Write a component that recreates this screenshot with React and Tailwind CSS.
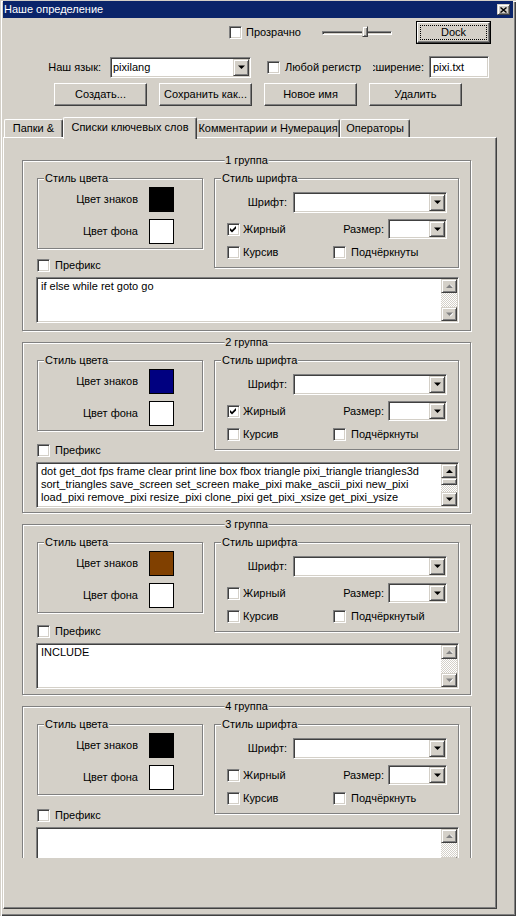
import React from 'react';

// classic win2k bevels
const sunken = 'border border-t-[#808080] border-l-[#808080] border-b-white border-r-white shadow-[inset_1px_1px_0_#404040,inset_-1px_-1px_0_#d4d0c8]';
const raised = 'border border-t-white border-l-white border-b-[#404040] border-r-[#404040] shadow-[inset_-1px_-1px_0_#808080]';
const raisedSm = 'border border-t-[#d4d0c8] border-l-[#d4d0c8] border-b-[#404040] border-r-[#404040] shadow-[inset_1px_1px_0_#fff,inset_-1px_-1px_0_#808080]';
const etched = 'border border-[#808080] shadow-[inset_1px_1px_0_#fff,1px_1px_0_#fff]';
const checker = 'bg-[image:repeating-conic-gradient(#fff_0%_25%,#d4d0c8_0%_50%)] bg-[length:2px_2px]';

const groups = [
  { n: 1, fg: 'bg-black', bold: true, under: 'Подчёркнуты', lines: ['if else while ret goto go'], off: 'mt-[10px]' },
  {
    n: 2,
    fg: 'bg-[#000080]',
    bold: true,
    under: 'Подчёркнуты',
    active: true,
    off: 'mt-[13px]',
    lines: [
      'dot get_dot fps frame clear print line box fbox triangle pixi_triangle triangles3d',
      'sort_triangles save_screen set_screen make_pixi make_ascii_pixi new_pixi',
      'load_pixi remove_pixi resize_pixi clone_pixi get_pixi_xsize get_pixi_ysize',
    ],
  },
  { n: 3, fg: 'bg-[#804000]', bold: false, under: 'Подчёркнутый', lines: ['INCLUDE'], off: 'mt-[12px]' },
  { n: 4, fg: 'bg-black', bold: false, under: 'Подчёркнуть', lines: [], off: 'mt-[14px]' },
];

function Tri({ up, gray }) {
  return (
    <svg width="7" height="5" viewBox="0 0 7 5">
      {gray && <path d={up ? 'M1 4H8L4.5 0.5Z' : 'M1 1H8L4.5 4.5Z'} fill="#fff" />}
      <path d={up ? 'M0 4H7L3.5 0.5Z' : 'M0 0.5H7L3.5 4Z'} fill={gray ? '#808080' : '#000'} />
    </svg>
  );
}

function Check({ checked }) {
  return (
    <span className={`flex items-center justify-center w-[13px] h-[13px] shrink-0 bg-white ${sunken}`}>
      {checked && (
        <svg width="7" height="7" viewBox="0 0 7 7">
          <path d="M0 2L2 4L6 0V2.6L2 6.6L0 4.6Z" fill="#000" />
        </svg>
      )}
    </span>
  );
}

function Combo({ value, size }) {
  return (
    <div className={`flex bg-white ${sunken} ${size}`}>
      <span className="flex-1 pl-[2px] flex items-center">{value}</span>
      <div className={`my-[1px] mr-[1px] w-[16px] flex items-center justify-center bg-[#d4d0c8] ${raisedSm}`}>
        <Tri />
      </div>
    </div>
  );
}

function ScrollBar({ active }) {
  return (
    <div className="my-[1px] mr-[1px] w-[16px] flex flex-col">
      <div className={`h-[14px] flex items-center justify-center bg-[#d4d0c8] ${raisedSm}`}>
        <Tri up gray={!active} />
      </div>
      {active && <div className={`h-[7px] bg-[#d4d0c8] ${raisedSm}`} />}
      <div className={`flex-1 ${checker}`} />
      <div className={`h-[14px] flex items-center justify-center bg-[#d4d0c8] ${raisedSm}`}>
        <Tri gray={!active} />
      </div>
    </div>
  );
}

function Group({ g }) {
  return (
    <div className={`relative shrink-0 w-[449px] h-[171px] pl-[14px] pt-[17px] ${etched}`}>
      <span className="absolute top-[-7px] left-1/2 -translate-x-1/2 bg-[#d4d0c8] px-[1px] whitespace-nowrap">
        {g.n} группа
      </span>
      <div className="flex">
        <div className="w-[166px] flex flex-col">
          <div className={`relative h-[71px] pt-[8px] flex flex-col gap-[7px] ${etched}`}>
            <span className="absolute top-[-7px] left-[6px] bg-[#d4d0c8] px-[1px]">Стиль цвета</span>
            <div className="flex items-center h-[25px]">
              <span className="w-[100px] text-right">Цвет знаков</span>
              <span className={`ml-[11px] w-[25px] h-[25px] border border-black ${g.fg}`} />
            </div>
            <div className="flex items-center h-[25px]">
              <span className="w-[100px] text-right">Цвет фона</span>
              <span className="ml-[11px] w-[25px] h-[25px] border border-black bg-white" />
            </div>
          </div>
          <div className={`flex items-center h-[13px] ${g.off}`}>
            <Check />
            <span className="ml-[5px]">Префикс</span>
          </div>
        </div>

        <div className={`relative ml-[11px] w-[245px] h-[90px] pt-[13px] ${etched}`}>
          <span className="absolute top-[-7px] left-[6px] bg-[#d4d0c8] px-[1px]">Стиль шрифта</span>
          <div className="flex items-center h-[21px]">
            <span className="w-[72px] text-right">Шрифт:</span>
            <div className="ml-[6px]">
              <Combo size="w-[154px] h-[21px]" />
            </div>
          </div>
          <div className="mt-[6px] flex items-center h-[20px]">
            <span className="ml-[12px]">
              <Check checked={g.bold} />
            </span>
            <span className="ml-[3px] w-[80px]">Жирный</span>
            <span className="w-[61px] text-right">Размер:</span>
            <div className="ml-[4px]">
              <Combo size="w-[59px] h-[20px]" />
            </div>
          </div>
          <div className="mt-[7px] flex items-center h-[13px]">
            <span className="ml-[12px]">
              <Check />
            </span>
            <span className="ml-[3px] w-[90px]">Курсив</span>
            <Check />
            <span className="ml-[5px] w-[74px] overflow-hidden whitespace-nowrap">{g.under}</span>
          </div>
        </div>
      </div>

      <div className={`mt-[5px] ml-[-1px] w-[423px] h-[46px] bg-white flex ${sunken}`}>
        <div className="flex-1 pl-[4px] pt-[2px] whitespace-pre overflow-hidden">
          {g.lines.map((l) => (
            <div key={l}>{l}</div>
          ))}
        </div>
        <ScrollBar active={g.active} />
      </div>
    </div>
  );
}

export default function App() {
  return (
    <div className="w-[516px] h-[916px] overflow-hidden bg-[#d4d0c8] text-black text-[11px] leading-[13px] font-['Liberation_Sans',Arial,sans-serif] shadow-[inset_1px_1px_0_#d4d0c8,inset_2px_2px_0_#fff,inset_-1px_-1px_0_#404040,inset_-2px_-2px_0_#808080]">
      {/* title bar */}
      <div className="mx-[3px] mt-[1px] h-[17px] bg-[#0a246a] flex items-center justify-between">
        <span className="pl-[1px] text-white">Наше определение</span>
        <div className={`mr-[3px] w-[13px] h-[11px] bg-[#d4d0c8] flex items-center justify-center ${raisedSm}`}>
          <svg width="7" height="6" viewBox="0 0 7 6">
            <path d="M0.5 0.5L6.5 5.5M6.5 0.5L0.5 5.5" stroke="#000" strokeWidth="1.4" />
          </svg>
        </div>
      </div>

      {/* row 1 */}
      <div className="mt-[3px] h-[23px] pl-[229px] flex items-center">
        <Check />
        <span className="ml-[4px] w-[76px]">Прозрачно</span>
        <div className="relative w-[70px] h-[23px] flex items-center">
          <div className="w-full h-[4px] border border-t-[#808080] border-l-[#808080] border-b-white border-r-white shadow-[inset_1px_1px_0_#404040]" />
          <div className={`absolute left-[40px] top-[5px] w-[6px] h-[11px] bg-[#d4d0c8] ${raisedSm}`} />
        </div>
        <div className="ml-[24px] w-[75px] h-[23px] border border-black flex">
          <div className={`flex-1 flex p-[2px] ${raised}`}>
            <div className="flex-1 border border-dotted border-black flex items-center justify-center">Dock</div>
          </div>
        </div>
      </div>

      {/* row 2 */}
      <div className="mt-[12px] h-[22px] flex items-center">
        <span className="w-[101px] text-right">Наш язык:</span>
        <div className="ml-[9px]">
          <Combo value="pixilang" size="w-[141px] h-[21px]" />
        </div>
        <span className="ml-[16px]">
          <Check />
        </span>
        <span className="ml-[5px] w-[88px] whitespace-nowrap">Любой регистр</span>
        <div className="w-[51px] flex justify-end overflow-hidden whitespace-nowrap">
          <span className="shrink-0">Расширение:</span>
        </div>
        <div className={`ml-[5px] w-[60px] h-[22px] bg-white flex items-center pl-[3px] ${sunken}`}>pixi.txt</div>
      </div>

      {/* row 3 */}
      <div className="mt-[5px] h-[23px] pl-[54px] flex gap-[12px]">
        {['Создать...', 'Сохранить как...', 'Новое имя', 'Удалить'].map((b) => (
          <div key={b} className={`w-[93px] h-[23px] flex items-center justify-center ${raised}`}>
            {b}
          </div>
        ))}
      </div>

      {/* tabs */}
      <div className="mt-[11px] h-[20px] pl-[4px] flex items-end">
        <div className="w-[59px] h-[18px] flex items-center justify-center border-t border-l border-white border-r border-r-[#404040] shadow-[inset_-1px_0_0_#808080] rounded-t-[2px]">
          Папки &amp;
        </div>
        <div className="relative z-10 w-[134px] h-[22px] mb-[-2px] pb-[2px] bg-[#d4d0c8] flex items-center justify-center border-t border-l border-white border-r border-r-[#404040] shadow-[inset_-1px_0_0_#808080] rounded-t-[2px]">
          Списки ключевых слов
        </div>
        <div className="w-[143px] h-[18px] flex items-center justify-center border-t border-white border-r border-r-[#404040] shadow-[inset_-1px_0_0_#808080] rounded-t-[2px]">
          Комментарии и Нумерация
        </div>
        <div className="w-[70px] h-[18px] flex items-center justify-center border-t border-l border-white border-r border-r-[#404040] shadow-[inset_-1px_0_0_#808080] rounded-t-[2px]">
          Операторы
        </div>
      </div>

      {/* tab panel */}
      <div className={`ml-[3px] w-[494px] h-[772px] ${raised}`}>
        <div className="h-[720px] overflow-hidden pl-[18px] pt-[22px] flex flex-col gap-[11px]">
          {groups.map((g) => (
            <Group key={g.n} g={g} />
          ))}
        </div>
      </div>
    </div>
  );
}
